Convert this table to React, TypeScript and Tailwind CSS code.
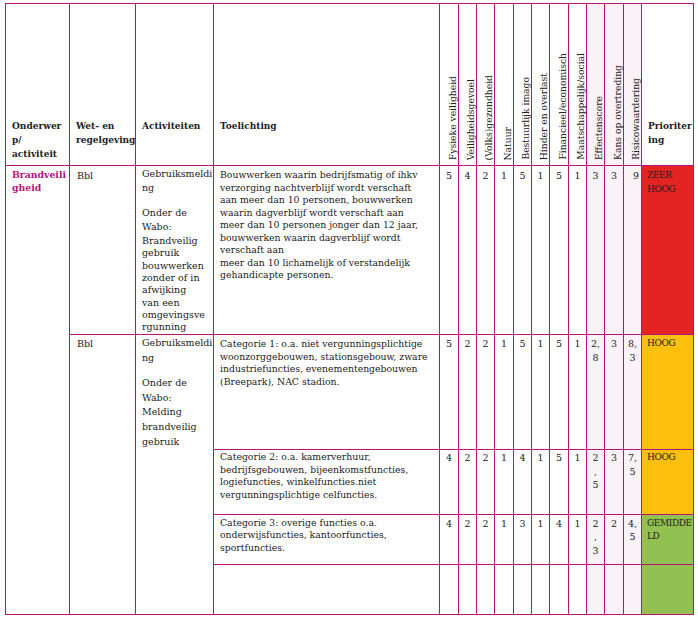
import React from "react"

const line = "bg-[#b7137a]"

const criteria = [
  "Fysieke veiligheid",
  "Veiligheidsgevoel",
  "(Volks)gezondheid",
  "Natuur",
  "Bestuurlijk imago",
  "Hinder en overlast",
  "Financieel/economisch",
  "Maatschappelijk/social",
  "Effectenscore",
  "Kans op overtreding",
  "Risicowaardering",
]

// scores per row, "\n" = forced line break like in the source document
const scores: string[][] = [
  ["5", "4", "2", "1", "5", "1", "5", "1", "3", "3", "9"],
  ["5", "2", "2", "1", "5", "1", "5", "1", "2,\n8", "3", "8,\n3"],
  ["4", "2", "2", "1", "4", "1", "5", "1", "2\n,\n5", "3", "7,\n5"],
  ["4", "2", "2", "1", "3", "1", "4", "1", "2\n,\n3", "2", "4,\n5"],
  ["", "", "", "", "", "", "", "", "", "", ""],
]

const toelichting: { lines: string[]; pt: string }[] = [
  {
    pt: "pt-[3px]",
    lines: [
      "Bouwwerken waarin bedrijfsmatig of ihkv",
      "verzorging nachtverblijf wordt verschaft",
      "aan meer dan 10 personen, bouwwerken",
      "waarin dagverblijf wordt verschaft aan",
      "meer dan 10 personen jonger dan 12 jaar,",
      "bouwwerken waarin dagverblijf wordt",
      "verschaft aan",
      "meer dan 10 lichamelijk of verstandelijk",
      "gehandicapte personen.",
    ],
  },
  {
    pt: "pt-[3px]",
    lines: [
      "Categorie 1: o.a. niet vergunningsplichtige",
      "woonzorggebouwen, stationsgebouw, zware",
      "industriefuncties, evenementengebouwen",
      "(Breepark), NAC stadion.",
    ],
  },
  {
    pt: "pt-[1px]",
    lines: [
      "Categorie 2: o.a. kamerverhuur,",
      "bedrijfsgebouwen, bijeenkomstfuncties,",
      "logiefuncties, winkelfuncties.niet",
      "vergunningsplichtige celfuncties.",
    ],
  },
  {
    pt: "pt-[1.5px]",
    lines: [
      "Categorie 3: overige functies o.a.",
      "onderwijsfuncties, kantoorfuncties,",
      "sportfuncties.",
    ],
  },
  { pt: "", lines: [] },
]

const prio = [
  { bg: "bg-[#e32422]", lines: ["ZEER", "HOOG"] },
  { bg: "bg-[#fbbf0c]", lines: ["HOOG"] },
  { bg: "bg-[#fbbf0c]", lines: ["HOOG"] },
  { bg: "bg-[#93c151]", lines: ["GEMIDDE", "LD"] },
  { bg: "bg-[#93c151]", lines: [] },
]

const numPt = ["pt-[3px]", "pt-[2px]", "pt-[1px]", "pt-[1.5px]", ""]

function HeaderCell({ lines }: { lines: string[] }) {
  return (
    <div className="bg-white pt-[116px] pl-[6px] font-bold text-[9px] leading-[13.8px] text-[#222]">
      {lines.map((l) => (
        <div key={l} className="whitespace-nowrap">
          {l}
        </div>
      ))}
    </div>
  )
}

function RotatedCell({ label, shaded }: { label: string; shaded: boolean }) {
  return (
    <div className={`${shaded ? "bg-[#f9f2f6]" : "bg-white"} flex items-end justify-end pb-[5px]`}>
      <span className="[writing-mode:vertical-rl] rotate-180 whitespace-nowrap text-[9.2px] leading-[10.5px] text-[#222]">
        {label}
      </span>
    </div>
  )
}

function ScoreCell({ value, shaded, pt, right }: { value: string; shaded: boolean; pt: string; right?: boolean }) {
  return (
    <div
      className={`${shaded ? "bg-[#f9f2f6]" : "bg-white"} ${pt} ${
        right ? "text-right pr-[2px]" : "text-center"
      } text-[9.5px] leading-[13.5px] text-[#222]`}
    >
      {value.split("\n").map((v, i) => (
        <div key={i}>{v}</div>
      ))}
    </div>
  )
}

export default function App() {
  return (
    <div className="min-h-[618px] w-[698px] bg-white pl-[5px] pt-[3px] font-['DejaVu_Serif',serif]">
      <div
        className={`inline-grid ${line} p-px gap-px grid-cols-[63px_65px_77px_225px_18px_17px_17px_18px_17px_17px_18px_17px_17px_18px_17px_51px] grid-rows-[161px_168px_114px_64px_49px_49px]`}
      >
        {/* header */}
        <HeaderCell lines={["Onderwer", "p/", "activiteit"]} />
        <HeaderCell lines={["Wet- en", "regelgeving"]} />
        <HeaderCell lines={["Activiteiten"]} />
        <HeaderCell lines={["Toelichting"]} />
        {criteria.map((c, i) => (
          <RotatedCell key={c} label={c} shaded={i >= 8} />
        ))}
        <HeaderCell lines={["Prioriter", "ing"]} />

        {/* body */}
        {scores.map((row, r) => (
          <React.Fragment key={r}>
            {r === 0 && (
              <div className="row-span-5 bg-white pt-[2px] pl-[6px] font-bold text-[9.3px] leading-[13.3px] text-[#b7137a]">
                <div>Brandveili</div>
                <div>gheid</div>
              </div>
            )}
            {r === 0 && (
              <>
                <div className="bg-white pt-[3px] pl-[7px] text-[9.5px] leading-[13.5px] text-[#222]">Bbl</div>
                <div className="overflow-hidden bg-white pt-[1px] pl-[6px] text-[9.5px] text-[#222] whitespace-nowrap">
                  <div className="leading-[14.3px]">
                    <div>Gebruiksmeldi</div>
                    <div>ng</div>
                  </div>
                  <div className="mt-[10px] leading-[14.8px]">
                    <div>Onder de</div>
                    <div>Wabo:</div>
                  </div>
                  <div className="leading-[12.3px]">
                    <div>Brandveilig</div>
                    <div>gebruik</div>
                    <div>bouwwerken</div>
                    <div>zonder of in</div>
                    <div>afwijking</div>
                    <div>van een</div>
                    <div>omgevingsve</div>
                    <div>rgunning</div>
                  </div>
                </div>
              </>
            )}
            {r === 1 && (
              <>
                <div className="row-span-4 bg-white pt-[2px] pl-[7px] text-[9.5px] leading-[13.5px] text-[#222]">Bbl</div>
                <div className="row-span-4 bg-white pt-[1px] pl-[6px] text-[9.5px] leading-[14.6px] text-[#222] whitespace-nowrap">
                  <div>Gebruiksmeldi</div>
                  <div>ng</div>
                  <div className="mt-[11px]">Onder de</div>
                  <div>Wabo:</div>
                  <div>Melding</div>
                  <div>brandveilig</div>
                  <div>gebruik</div>
                </div>
              </>
            )}
            <div
              className={`bg-white ${toelichting[r].pt} pl-[6px] text-[9.3px] leading-[12.5px] text-[#222] whitespace-nowrap`}
            >
              {toelichting[r].lines.map((l) => (
                <div key={l}>{l}</div>
              ))}
            </div>
            {row.map((v, i) => (
              <ScoreCell key={i} value={v} shaded={i >= 8} pt={numPt[r]} right={r === 0 && i === 10} />
            ))}
            <div
              className={`${prio[r].bg} ${numPt[r]} overflow-hidden pl-[5px] text-[9px] tracking-[-0.4px] leading-[13.7px] text-[#222] whitespace-nowrap`}
            >
              {prio[r].lines.map((l) => (
                <div key={l}>{l}</div>
              ))}
            </div>
          </React.Fragment>
        ))}
      </div>
    </div>
  )
}
